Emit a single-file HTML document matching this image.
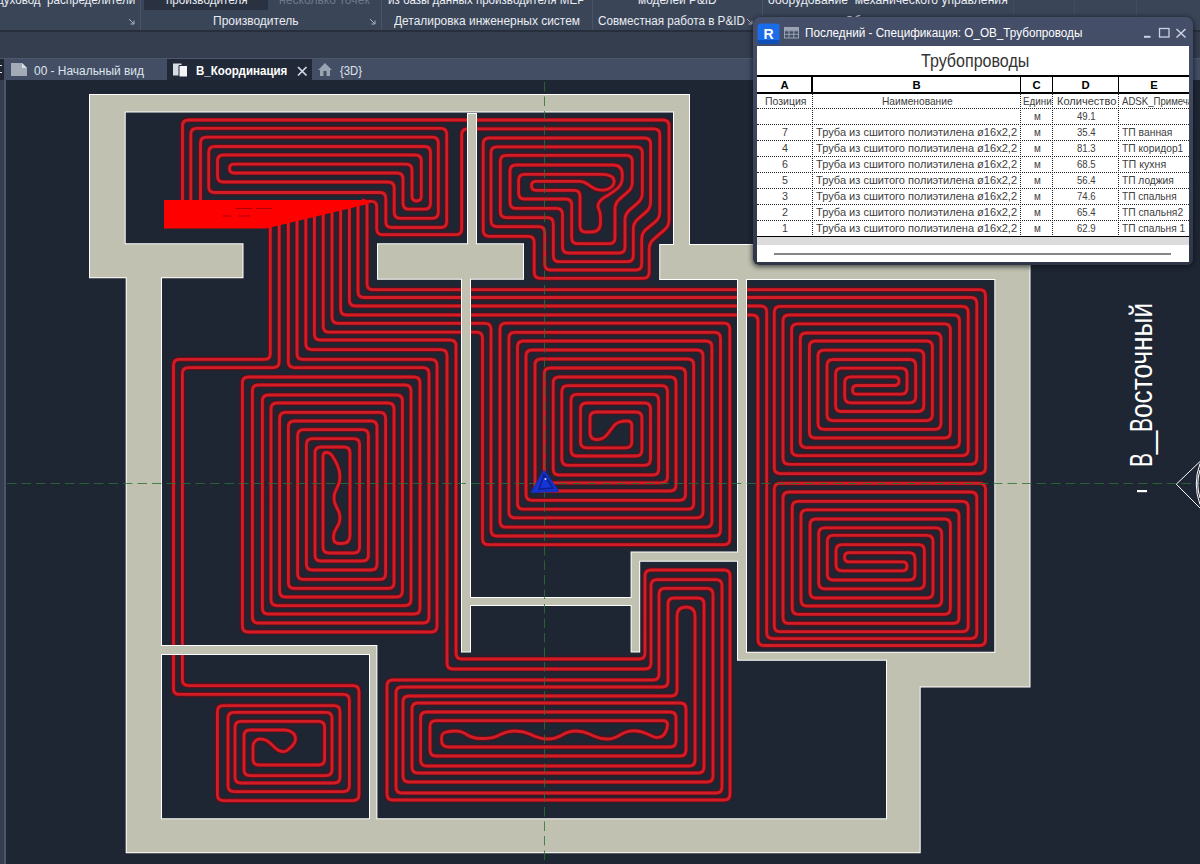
<!DOCTYPE html>
<html lang="ru">
<head>
<meta charset="utf-8">
<title>Revit - В_Координация</title>
<style>
html,body{margin:0;padding:0;}
body{width:1200px;height:864px;overflow:hidden;background:#1f2633;position:relative;font-family:"Liberation Sans",sans-serif;}
#plan{position:absolute;left:0;top:0;}
.abs{position:absolute;}
#ribbon{left:0;top:0;width:1200px;height:30px;background:#3b4558;}
#ribline{left:0;top:30px;width:1200px;height:2px;background:#282f3c;}
#optbar{left:0;top:32px;width:1200px;height:26px;background:#353e4f;}
#tabbar{left:0;top:58px;width:1200px;height:22px;background:#434e65;border-top:1px solid #4d586d;box-sizing:border-box;}
#leftstrip{left:0;top:80px;width:4px;height:784px;background:#343e50;border-right:2px solid #4a556a;}
.tx{position:absolute;white-space:nowrap;transform-origin:0 0;}
.rt{color:#e9edf3;font-size:12px;line-height:14px;}
.tt{color:#dfe4ec;font-size:12.5px;line-height:16px;}
.rt.dis{color:#6e7889;}
.sep{position:absolute;top:0;width:1px;height:30px;background:#4a5468;}
.tab{position:absolute;top:59px;height:21px;line-height:21px;font-size:13px;color:#dfe4ec;white-space:nowrap;}
#tabactive{left:167px;width:145px;background:#212938;}
#win{left:753px;top:17px;width:440px;height:248px;background:linear-gradient(to bottom,#454f69 0,#434d66 30px,#3a4358 55%,#2e3647 100%);border-radius:8px 8px 6px 6px;box-shadow:0 1px 5px 1px rgba(10,14,22,.65);}
.wt{font-size:12px;line-height:16px;color:#fff;}
.gc{font-size:10.7px;line-height:16px;color:#404040;}
.vt{font-size:31.4px;line-height:34px;color:#fff;}
.gtitle{font-size:18px;line-height:26px;color:#333;}
#wincontent{position:absolute;left:4px;top:29px;width:432px;height:216px;background:#fff;overflow:hidden;}
.gost{font-family:"Liberation Sans",sans-serif;color:#222;white-space:nowrap;position:absolute;transform-origin:0 0;}
.hl{position:absolute;left:0;width:432px;height:0;border-top:1px dotted #222;}
.vl{position:absolute;top:47px;width:0;height:144px;border-left:1px dotted #222;}
.cell{position:absolute;height:16px;line-height:16px;font-size:13px;color:#2a2a2a;white-space:nowrap;}
.cell span{display:inline-block;transform-origin:0 50%;}
.cc{text-align:center;}
.cc span{transform-origin:50% 50%;}
.hd{position:absolute;top:32px;height:15px;line-height:15px;font-size:11.3px;font-weight:bold;color:#000;text-align:center;}
</style>
</head>
<body>
<svg id="plan" width="1200" height="864" viewBox="0 0 1200 864">
<defs><path id="pp" d="M200.5 203L200.5 143.2Q200.5 137.2 206.5 137.2L432.3 137.2Q438.3 137.2 438.3 143.2L438.3 212.3Q438.3 218.3 432.3 218.3L400.2 218.3Q394.2 218.3 394.2 212.3L394.2 188Q394.2 182 388.2 182L223.5 182Q217.5 182 217.5 176L217.5 161Q217.5 155 223.5 155L415.3 155Q421.3 155 421.3 161L421.3 196.3Q421.3 201 416.6 201L416.6 201Q412 201 412 196.3L412 170.2Q412 164.2 406 164.2L233.9 164.2Q229.5 164.2 229.5 168.6L229.5 168.6Q229.5 173 233.9 173L397 173Q403 173 403 179L403 203.2Q403 209.2 409 209.2L424.5 209.2Q430.5 209.2 430.5 203.2L430.5 152.5Q430.5 146.5 424.5 146.5L214.7 146.5Q208.7 146.5 208.7 152.5L208.7 186.5Q208.7 192.5 214.7 192.5L379.8 192.5Q385.8 192.5 385.8 198.5L385.8 221.5Q385.8 227.5 391.8 227.5L440.7 227.5Q446.7 227.5 446.7 221.5L446.7 134.3Q446.7 128.3 440.7 128.3L196.8 128.3Q190.8 128.3 190.8 134.3L190.8 203M182.5 203L182.5 126Q182.5 120 188.5 120L663 120Q669 120 669 126L669 220Q669 226 664.4 229.9L653.8 239.1Q649.2 243 649.2 249L649.2 272.3Q649.2 278.3 643.2 278.3L540.2 278.3Q534.2 278.3 534.2 272.3L534.2 242.3Q534.2 236.3 528.2 236.3L489.2 236.3Q483.2 236.3 483.2 230.3L483.2 144Q483.2 138 489.2 138L644.6 138Q650.6 138 650.6 144L650.6 202Q650.6 208 646.1 211.9L637.8 219.1Q633.3 223 633.3 229L633.3 255.7Q633.3 261.7 627.3 261.7L559.3 261.7Q553.3 261.7 553.3 255.7L553.3 223.6Q553.3 217.6 547.3 217.6L506.3 217.6Q500.3 217.6 500.3 211.6L500.3 161.4Q500.3 155.4 506.3 155.4L626.3 155.4Q632.3 155.4 632.3 161.4L632.3 182Q632.3 188 627.8 191.9L619.5 199.1Q615 203 615 209L615 237.7Q615 243.7 609 243.7L577.7 243.7Q571.7 243.7 571.7 237.7L571.7 205Q571.7 199 565.7 199L524.6 199Q518.6 199 518.6 193L518.6 180.3Q518.6 174.3 524.6 174.3L602 174.3Q606 174.3 609.8 175.7L610.2 175.8Q613.5 177 614 180.5L614 180.5Q614.5 184 612 186.5L611.8 186.8Q609 189.5 605.1 189.9L603.3 190.1Q599 190.5 595 188.8L595 188.8Q591 187 587.6 184.2L587.5 184.2Q584 181.3 579.5 181.3L536 181.3Q531.5 181.3 531.5 185.8L531.5 185.8Q531.5 190.3 536 190.3L574 190.3Q580 190.3 580 196.3L580 226Q580 232 586 232L591 232Q600.5 232 600.5 222.5L600.5 217.4Q600.5 213 598.8 209L598.6 208.8Q597 205 599.5 201.8L599.5 201.8Q602 198.5 605.6 196.5L607.5 195.5Q613 192.5 617.6 188.3L617.6 188.2Q622.3 184 622.3 177.7L622.3 174.5Q622.3 165 612.8 165L516 165Q510 165 510 171L510 202.4Q510 208.4 516 208.4L556.5 208.4Q562.5 208.4 562.5 214.4L562.5 247Q562.5 253 568.5 253L619 253Q625 253 625 247L625 220Q625 214 629.5 210.1L637.8 202.9Q642.3 199 642.3 193L642.3 152.8Q642.3 146.8 636.3 146.8L497 146.8Q491 146.8 491 152.8L491 220.6Q491 226.6 497 226.6L538.7 226.6Q544.7 226.6 544.7 232.6L544.7 264Q544.7 270 550.7 270L635.7 270Q641.7 270 641.7 264L641.7 239Q641.7 233 646.3 229.2L655.2 221.8Q659.8 218 659.8 212L659.8 134.8Q659.8 128.8 653.8 128.8L467.7 128.8Q461.7 128.8 461.7 134.8L461.7 228.7Q461.7 234.7 455.7 234.7L382.7 234.7Q376.7 234.7 376.7 228.7L376.7 206.7Q376.7 201.3 371.4 201.3L366 201.3M274.2 220.8L276.7 221.6Q279.2 222.3 279.2 225L279.2 361.6Q279.2 367.6 273.2 367.6L188.4 367.6Q182.4 367.6 182.4 373.6L182.4 679.6Q182.4 685.6 188.4 685.6L353 685.6Q359 685.6 359 691.6L359 794.6Q359 800.6 353 800.6L223.4 800.6Q217.4 800.6 217.4 794.6L217.4 711.6Q217.4 705.6 223.4 705.6L334 705.6Q340 705.6 340 711.6L340 777Q340 783 334 783L241 783Q235 783 235 777L235 727.4Q235 721.4 241 721.4L318.6 721.4Q324.6 721.4 324.6 727.4L324.6 759Q324.6 765 318.6 765L259 765Q253 765 253 759L253 746.4Q253 743 255.5 740.8L255.5 740.8Q258 738.5 261.3 739.1L262.5 739.2Q267 740 270.3 743.2L275.8 748.4Q278.5 751 282.2 751.5L282.2 751.5Q286 752 288.7 749.3L292.8 745.2Q295.5 742.5 295.5 738.8L295.5 738.8Q295.5 735 292.5 732.7L292.2 732.5Q289 730 284.9 730L250 730Q244 730 244 736L244 769.6Q244 775.6 250 775.6L326 775.6Q332 775.6 332 769.6L332 718.4Q332 712.4 326 712.4L234 712.4Q228 712.4 228 718.4L228 785.6Q228 791.6 234 791.6L343.4 791.6Q349.4 791.6 349.4 785.6L349.4 700.4Q349.4 694.4 343.4 694.4L179.5 694.4Q173.5 694.4 173.5 688.4L173.5 365.4Q173.5 359.4 179.5 359.4L264.3 359.4Q270.3 359.4 270.3 353.4L270.3 229.7Q270.3 228 270.3 226.2L270.3 226.2Q270.3 224.5 268.6 224L265.3 223M292 216.6L294.5 217.4Q297 218.1 297 220.7L297 353.4Q297 359.4 303 359.4L431 359.4Q437 359.4 437 365.4L437 626Q437 632 431 632L248.4 632Q242.4 632 242.4 626L242.4 383Q242.4 377 248.4 377L414 377Q420 377 420 383L420 608Q420 614 414 614L268.4 614Q262.4 614 262.4 608L262.4 401Q262.4 395 268.4 395L396.4 395Q402.4 395 402.4 401L402.4 591Q402.4 597 396.4 597L285.6 597Q279.6 597 279.6 591L279.6 418.4Q279.6 412.4 285.6 412.4L379.6 412.4Q385.6 412.4 385.6 418.4L385.6 573.4Q385.6 579.4 379.6 579.4L303.6 579.4Q297.6 579.4 297.6 573.4L297.6 435.6Q297.6 429.6 303.6 429.6L362.4 429.6Q368.4 429.6 368.4 435.6L368.4 555Q368.4 561 362.4 561L321 561Q315 561 315 555L315 453Q315 447 321 447L344 447Q350 447 350 453L350 535.2Q350 543.5 341.8 543.5L339.2 543.5Q333.5 543.5 333.5 537.8L333.5 537.6Q333.5 532 336.8 527.5L337.1 527.1Q340 523 340 518L340 518Q340 513 337.4 508.7L336.6 507.3Q334 503 334 498L334 498Q334 493 336.6 488.7L337 488Q340 483 340 477.2L340 477Q340 471 337.5 465.5L336.9 464.1Q335 460 332.5 456.2L331.9 455.4Q330 452.5 326.5 452.5L326.5 452.5Q323 452.5 323 456L323 547Q323 553 329 553L353.6 553Q359.6 553 359.6 547L359.6 444.6Q359.6 438.6 353.6 438.6L312.4 438.6Q306.4 438.6 306.4 444.6L306.4 564Q306.4 570 312.4 570L371 570Q377 570 377 564L377 427Q377 421 371 421L294.4 421Q288.4 421 288.4 427L288.4 582.4Q288.4 588.4 294.4 588.4L388 588.4Q394 588.4 394 582.4L394 409Q394 403 388 403L277 403Q271 403 271 409L271 599.6Q271 605.6 277 605.6L405 605.6Q411 605.6 411 599.6L411 391Q411 385 405 385L258.4 385Q252.4 385 252.4 391L252.4 617Q252.4 623 258.4 623L423 623Q429 623 429 617L429 373.6Q429 367.6 423 367.6L294.3 367.6Q288.3 367.6 288.3 361.6L288.3 222.8Q288.3 220.2 285.8 219.4L283.3 218.7M318.2 210.4L320.7 211.2Q323.2 211.9 323.2 214.5L323.2 326.2Q323.2 332.2 329.2 332.2L476.5 332.2Q482.5 332.2 482.5 338.2L482.5 538.7Q482.5 544.7 488.5 544.7L723.8 544.7Q729.8 544.7 729.8 538.7L729.8 329.2Q729.8 323.2 723.8 323.2L506 323.2Q500 323.2 500 329.2L500 521.2Q500 527.2 506 527.2L705.9 527.2Q711.9 527.2 711.9 521.2L711.9 347Q711.9 341 705.9 341L523.5 341Q517.5 341 517.5 347L517.5 503.2Q517.5 509.2 523.5 509.2L687.7 509.2Q693.7 509.2 693.7 503.2L693.7 365Q693.7 359 687.7 359L541 359Q535 359 535 365L535 485Q535 491 541 491L670 491Q676 491 676 485L676 383Q676 377 670 377L559.2 377Q553.2 377 553.2 383L553.2 469Q553.2 475 559.2 475L652.7 475Q658.7 475 658.7 469L658.7 400.4Q658.7 394.4 652.7 394.4L577 394.4Q571 394.4 571 400.4L571 450Q571 456 577 456L635.9 456Q641.9 456 641.9 450L641.9 418Q641.9 412 635.9 412L596 412Q590 412 590 418L590 433Q590 439.5 596.5 439.5L597.5 439.5Q603 439.5 606.5 435.2L606.8 434.9Q610 431 613 427L613.8 425.9Q616 423 619.5 422L619.5 422Q623 421 626.6 421L627.4 421Q631.8 421 631.8 425.4L631.8 441.8Q631.8 447.8 625.8 447.8L586.5 447.8Q580.5 447.8 580.5 441.8L580.5 409Q580.5 403 586.5 403L644.5 403Q650.5 403 650.5 409L650.5 459.3Q650.5 465.3 644.5 465.3L567.8 465.3Q561.8 465.3 561.8 459.3L561.8 391.6Q561.8 385.6 567.8 385.6L661.5 385.6Q667.5 385.6 667.5 391.6L667.5 476.8Q667.5 482.8 661.5 482.8L550.3 482.8Q544.3 482.8 544.3 476.8L544.3 374Q544.3 368 550.3 368L679.5 368Q685.5 368 685.5 374L685.5 494.3Q685.5 500.3 679.5 500.3L532 500.3Q526 500.3 526 494.3L526 356Q526 350 532 350L697 350Q703 350 703 356L703 511.8Q703 517.8 697 517.8L514.9 517.8Q508.9 517.8 508.9 511.8L508.9 338.4Q508.9 332.4 514.9 332.4L714.5 332.4Q720.5 332.4 720.5 338.4L720.5 530Q720.5 536 714.5 536L497 536Q491 536 491 530L491 329.3Q491 323.3 485 323.3L338 323.3Q332 323.3 332 317.3L332 212.4Q332 209.8 329.5 209.1L327 208.3M309.4 212.5L311.9 213.3Q314.4 214 314.4 216.6L314.4 334Q314.4 340 320.4 340L450 340Q456 340 456 346L456 653Q456 659 462 659L639 659Q645 659 645 653L645 576Q645 570 651 570L724 570Q730 570 730 576L730 794Q730 800 724 800L393 800Q387 800 387 794L387 686Q387 680 393 680L653 680Q659 680 659 674L659 594.4Q659 588.4 665 588.4L707 588.4Q713 588.4 713 594.4L713 776Q713 782 707 782L409 782Q403 782 403 776L403 702Q403 696 409 696L671 696Q677 696 677 690L677 616Q677 607 686 607L686 607Q695 607 695 616L695 760Q695 766 689 766L426.6 766Q420.6 766 420.6 760L420.6 718Q420.6 712 426.6 712L670 712Q676 712 676 718L676 741Q676 747 670 747L448.5 747Q441.5 747 441.5 740L441.5 737.9Q441.5 733 446.2 732L446.2 732Q451 731 455.9 731L456 731Q461 731 465.2 733.6L467 734.8Q473 738.5 480.1 738.5L485.1 738.5Q493 738.5 500 734.8L500 734.8Q507 731 514.9 731L515 731Q523 731 530.3 734.2L534.6 736.2Q541 739 548 739L548 739Q555 739 561.1 735.5L562.9 734.5Q569 731 576 731L576 731Q583 731 589.3 734L593.7 736Q600 739 607 739L607 739Q614 739 619.8 735.1L620.2 734.9Q626 731 633 730.8L633 730.8Q640 730.5 646.3 733.5L652.8 736.5Q656 738 659.5 737.2L659.5 737.2Q663 736.5 664.8 733.4L665.3 732.6Q667.5 729 667.5 724.8L667.5 724.8Q667.5 720.6 663.3 720.6L436 720.6Q430 720.6 430 726.6L430 750Q430 756 436 756L680 756Q686 756 686 750L686 709Q686 703 680 703L418 703Q412 703 412 709L412 767Q412 773 418 773L698 773Q704 773 704 767L704 604Q704 598 698 598L674 598Q668 598 668 604L668 681Q668 687 662 687L402 687Q396 687 396 693L396 787Q396 793 402 793L716 793Q722 793 722 787L722 585.6Q722 579.6 716 579.6L657 579.6Q651 579.6 651 585.6L651 663Q651 669 645 669L453 669Q447 669 447 663L447 355.6Q447 349.6 441 349.6L311.8 349.6Q305.8 349.6 305.8 343.6L305.8 218.7Q305.8 216 303.3 215.3L300.8 214.5M362 200L364.5 200.8Q367 201.5 367 204.1L367 283.7Q367 289.7 373 289.7L979.5 289.7Q985.5 289.7 985.5 295.7L985.5 467.6Q985.5 473.6 979.5 473.6L780.3 473.6Q774.3 473.6 774.3 467.6L774.3 312.4Q774.3 306.4 780.3 306.4L962.2 306.4Q968.2 306.4 968.2 312.4L968.2 449.6Q968.2 455.6 962.2 455.6L797.6 455.6Q791.6 455.6 791.6 449.6L791.6 329.8Q791.6 323.8 797.6 323.8L944.4 323.8Q950.4 323.8 950.4 329.8L950.4 432Q950.4 438 944.4 438L815.4 438Q809.4 438 809.4 432L809.4 347Q809.4 341 815.4 341L926.4 341Q932.4 341 932.4 347L932.4 414.6Q932.4 420.6 926.4 420.6L833 420.6Q827 420.6 827 414.6L827 365.5Q827 359.5 833 359.5L909.7 359.5Q915.7 359.5 915.7 365.5L915.7 396.8Q915.7 402.8 909.7 402.8L850.7 402.8Q844.7 402.8 844.7 396.8L844.7 382.8Q844.7 376.8 850.7 376.8L894.6 376.8Q899 376.8 899 381.1L899 381.1Q899 385.5 894.6 385.5L856.9 385.5Q852.5 385.5 852.5 389.9L852.5 389.9Q852.5 394.2 856.9 394.2L901 394.2Q907 394.2 907 388.2L907 374.2Q907 368.2 901 368.2L841.6 368.2Q835.6 368.2 835.6 374.2L835.6 405.5Q835.6 411.5 841.6 411.5L917.8 411.5Q923.8 411.5 923.8 405.5L923.8 356.2Q923.8 350.2 917.8 350.2L824 350.2Q818 350.2 818 356.2L818 423.3Q818 429.3 824 429.3L935 429.3Q941 429.3 941 423.3L941 339Q941 333 935 333L806.3 333Q800.3 333 800.3 339L800.3 441.6Q800.3 447.6 806.3 447.6L953.5 447.6Q959.5 447.6 959.5 441.6L959.5 321Q959.5 315 953.5 315L789 315Q783 315 783 321L783 458.3Q783 464.3 789 464.3L970.8 464.3Q976.8 464.3 976.8 458.3L976.8 303.5Q976.8 297.5 970.8 297.5L364 297.5Q358 297.5 358 291.5L358 208.9Q358 207.2 358 205.4L358 205.4Q358 203.7 356.3 203.2L353 202.2M335.6 206.3L338.1 207Q340.6 207.8 340.6 210.4L340.6 309Q340.6 315 346.6 315L752 315Q758 315 758 321L758 639.5Q758 645.5 764 645.5L979.5 645.5Q985.5 645.5 985.5 639.5L985.5 489.3Q985.5 483.3 979.5 483.3L780.3 483.3Q774.3 483.3 774.3 489.3L774.3 625.7Q774.3 631.7 780.3 631.7L962.2 631.7Q968.2 631.7 968.2 625.7L968.2 507.3Q968.2 501.3 962.2 501.3L798.2 501.3Q792.2 501.3 792.2 507.3L792.2 608.3Q792.2 614.3 798.2 614.3L944.4 614.3Q950.4 614.3 950.4 608.3L950.4 525Q950.4 519 944.4 519L816 519Q810 519 810 525L810 592Q810 598 816 598L927 598Q933 598 933 592L933 541.3Q933 535.3 927 535.3L833.3 535.3Q827.3 535.3 827.3 541.3L827.3 574Q827.3 580 833.3 580L909 580Q915 580 915 574L915 558.7Q915 552.7 909 552.7L849 552.7Q844.5 552.7 844.5 557.2L844.5 557.2Q844.5 561.8 849 561.8L902.5 561.8Q907 561.8 907 566.3L907 566.3Q907 570.8 902.5 570.8L842 570.8Q836 570.8 836 564.8L836 550.7Q836 544.7 842 544.7L918.4 544.7Q924.4 544.7 924.4 550.7L924.4 582.8Q924.4 588.8 918.4 588.8L824.7 588.8Q818.7 588.8 818.7 582.8L818.7 533.8Q818.7 527.8 824.7 527.8L935.7 527.8Q941.7 527.8 941.7 533.8L941.7 600Q941.7 606 935.7 606L807 606Q801 606 801 600L801 515.8Q801 509.8 807 509.8L953 509.8Q959 509.8 959 515.8L959 617.4Q959 623.4 953 623.4L789 623.4Q783 623.4 783 617.4L783 498Q783 492 789 492L970.8 492Q976.8 492 976.8 498L976.8 632.6Q976.8 638.6 970.8 638.6L772.7 638.6Q766.7 638.6 766.7 632.6L766.7 312Q766.7 306 760.7 306L355.4 306Q349.4 306 349.4 300L349.4 211Q349.4 209.2 349.4 207.5L349.4 207.5Q349.4 205.7 347.7 205.2L344.4 204.2"/></defs>
<g fill="none" stroke-linejoin="round"><use href="#pp" stroke="#6e0014" stroke-opacity=".2" stroke-width="7"/><use href="#pp" stroke="#7a0a14" stroke-width="4.1"/><use href="#pp" stroke="#d21c26" stroke-width="2.8"/></g>
<path d="M164 200H369V203.8L266 228.4H164Z" fill="#ff0000"/>
<path d="M236 208.5h16M256 208.5h16M222 216h10M238 216h12" stroke="#b00010" stroke-width="1"/>
<path d="M89.0 278.3L125.7 278.3L125.7 818.3L125.7 853.3L162.0 853.3L886.0 853.3L920.7 853.3L920.7 818.3L920.7 687.5L994.3 687.5L1030.5 687.5L1030.5 651.8L1030.5 280.0L1030.5 244.0L994.3 244.0L690.0 244.0L690.0 112.6L690.0 94.0L673.0 94.0L125.7 94.0L89.0 94.0L89.0 112.6L89.0 243.3ZM377.4 818.3L377.4 655.0L377.4 645.0L369.0 645.0L162.0 645.0L162.0 278.3L243.5 278.3L243.5 243.3L125.7 243.3L125.7 112.6L673.0 112.6L673.0 244.0L659.2 244.0L659.2 280.0L737.0 280.0L737.0 551.6L640.2 551.6L630.6 551.6L630.6 561.8L630.6 597.0L471.0 597.0L471.0 279.7L524.0 279.7L524.0 243.3L477.0 243.3L477.0 113.0L467.0 113.0L467.0 243.3L377.0 243.3L377.0 279.7L461.0 279.7L461.0 652.6L471.0 652.6L471.0 606.0L630.6 606.0L630.6 652.6L640.2 652.6L640.2 561.8L737.0 561.8L737.0 651.8L737.0 660.7L747.0 660.7L886.0 660.7L886.0 687.5L886.0 818.3ZM369.0 818.3L162.0 818.3L162.0 655.0L369.0 655.0ZM747.0 551.6L747.0 280.0L994.3 280.0L994.3 651.8L920.7 651.8L886.0 651.8L747.0 651.8L747.0 561.8Z" fill="#ffffff" fill-rule="evenodd"/>
<path d="M90.0 277.3L126.7 277.3L126.7 852.3L919.7 852.3L919.7 686.5L1029.5 686.5L1029.5 245.0L689.0 245.0L689.0 95.0L90.0 95.0ZM746.0 279.0L995.3 279.0L995.3 652.8L746.0 652.8ZM376.4 819.3L376.4 646.0L161.0 646.0L161.0 277.3L242.5 277.3L242.5 244.3L124.7 244.3L124.7 111.6L674.0 111.6L674.0 245.0L660.2 245.0L660.2 279.0L738.0 279.0L738.0 552.6L631.6 552.6L631.6 598.0L470.0 598.0L470.0 278.7L523.0 278.7L523.0 244.3L476.0 244.3L476.0 114.0L468.0 114.0L468.0 244.3L378.0 244.3L378.0 278.7L462.0 278.7L462.0 651.6L470.0 651.6L470.0 605.0L631.6 605.0L631.6 651.6L639.2 651.6L639.2 560.8L738.0 560.8L738.0 659.7L887.0 659.7L887.0 819.3ZM370.0 819.3L161.0 819.3L161.0 654.0L370.0 654.0Z" fill="#c1c1b1" fill-rule="evenodd"/>
<path d="M7 483.5H1200M544.5 82V864" stroke="#2b7035" stroke-opacity=".8" stroke-width="1" stroke-dasharray="9.5 5" fill="none"/>
<g transform="translate(545 483)"><path d="M-1 -12L13 8L-13 9Z" fill="#1634d8"/><path d="M-1 -12L13 8L-13 9Z" fill="none" stroke="#1430c0" stroke-width="2" stroke-linejoin="round"/><path d="M-1 -8L-6 6L8 5Z" fill="none" stroke="#0b1f8a" stroke-width="1.6"/><circle cx="0.5" cy="-4" r="1" fill="#cfe0ff"/></g>
<path d="M1200 461.5L1176.3 484.2L1200 508" fill="none" stroke="#fff" stroke-width="1"/>
<path d="M1200 463.5Q1192.5 484 1200 504.5M1200 470Q1195.6 484 1200 498" fill="none" stroke="#fff" stroke-width="1"/>
<rect x="1137" y="490" width="10" height="2.2" fill="#fff"/>
</svg>
<div id="ribbon" class="abs">
  <div class="abs" style="left:144px;top:0;width:124px;height:10px;background:#2a3241;"></div>
  <div class="sep" style="left:140px;"></div>
  <div class="sep" style="left:381px;"></div>
  <div class="sep" style="left:592px;"></div>
  <div class="sep" style="left:762px;"></div>
  <div class="sep" style="left:1013px;background:#434d61;"></div>
  <div class="sep" style="left:1074px;background:#434d61;"></div>
  <div class="sep" style="left:1136px;background:#434d61;"></div>
  <svg class="abs" style="left:128px;top:18px;" width="8" height="8"><path d="M1 1L6 6M6 2.5V6H2.5" stroke="#aab2c0" stroke-width="1" fill="none"/></svg>
  <svg class="abs" style="left:369px;top:18px;" width="8" height="8"><path d="M1 1L6 6M6 2.5V6H2.5" stroke="#aab2c0" stroke-width="1" fill="none"/></svg>
  <svg class="abs" style="left:746px;top:18px;" width="8" height="8"><path d="M1 1L6 6M6 2.5V6H2.5" stroke="#aab2c0" stroke-width="1" fill="none"/></svg>
</div>
<div id="r1" class="tx rt" style="left:-3px;top:-7px;transform:scaleX(0.9650);">духовод&nbsp; распределители</div>
<div id="r2" class="tx rt" style="left:166px;top:-7px;transform:scaleX(0.9762);">производителя</div>
<div id="r3" class="tx rt" style="left:279px;top:-7px;transform:scaleX(1.0111);color:#6e7889;">несколько точек</div>
<div id="r4" class="tx rt" style="left:388px;top:-7px;transform:scaleX(0.9657);">из базы данных производителя MEP</div>
<div id="r5" class="tx rt" style="left:638px;top:-7px;transform:scaleX(0.9875);">моделей P&amp;ID</div>
<div id="r6" class="tx rt" style="left:768px;top:-7px;transform:scaleX(1.0127);">оборудование&nbsp; механического управления</div>
<div id="r7" class="tx rt" style="left:213px;top:13.5px;transform:scaleX(1.0000);">Производитель</div>
<div id="r8" class="tx rt" style="left:394px;top:13.5px;transform:scaleX(0.9947);">Деталировка инженерных систем</div>
<div id="r9" class="tx rt" style="left:598px;top:13.5px;transform:scaleX(0.9735);">Совместная работа в P&amp;ID</div>
<div id="r10" class="tx rt" style="left:845px;top:13.5px;transform:scaleX(0.9756);">Оборудование</div>
<div id="ribline" class="abs"></div>
<div id="optbar" class="abs"></div>
<div id="tabbar" class="abs"></div>
<div class="abs" style="left:0;top:59px;width:4px;height:21px;background:#202733;"></div>
<div class="abs" style="left:0;top:64.5px;width:2px;height:1.5px;background:#dfe4ec;"></div>
<div class="abs" style="left:0;top:71.5px;width:2px;height:1.5px;background:#dfe4ec;"></div>
<div id="tabactive" class="tab"></div>
<svg class="abs" style="left:11px;top:63px;" width="17" height="14"><path d="M0 0H11L16 5V13H0Z" fill="#a3abb7"/><path d="M11 0V5H16Z" fill="#d9dee6"/></svg>
<svg class="abs" style="left:173px;top:62px;" width="18" height="16"><path d="M0 1.5H8.5V13.5H0Z" fill="#d7dbe2"/><path d="M6 3.5H14.5V15H6Z" fill="#f2f4f7" stroke="#212938" stroke-width="1"/></svg>
<svg class="abs" style="left:297px;top:65.5px;" width="11" height="11"><path d="M1 1L9.5 9.5M9.5 1L1 9.5" stroke="#d5dae2" stroke-width="1.7" fill="none"/></svg>
<svg class="abs" style="left:317px;top:62px;" width="16" height="15"><path d="M8 1L15 8H13V14H3V8H1Z" fill="#9aa3b0"/><path d="M6.5 9H9.5V14H6.5Z" fill="#434e65"/></svg>
<div id="t1" class="tx tt" style="left:34.3px;top:62.8px;transform:scaleX(0.9539);">00 - Начальный вид</div>
<div id="t2" class="tx tt" style="left:196px;top:62.8px;transform:scaleX(0.9222);font-weight:bold;color:#fff;">В_Координация</div>
<div id="t3" class="tx tt" style="left:340px;top:62.8px;transform:scaleX(0.9042);">{3D}</div>
<div id="leftstrip" class="abs"></div>

<div class="abs" style="left:1125.4px;top:466.2px;width:0;height:0;transform-origin:0 0;transform:rotate(-90deg);">
<div id="v1" class="tx vt" style="left:-1.5px;top:0px;transform:scaleX(0.6667);">В</div><div id="v2" class="tx vt" style="left:11.9px;top:0px;transform:scaleX(1.3235);">_</div><div id="v3" class="tx vt" style="left:33.9px;top:0px;transform:scaleX(0.6667);">В</div><div id="v4" class="tx vt" style="left:48px;top:0px;transform:scaleX(0.8355);">осточный</div>
</div>

<div id="win" class="abs">
  <svg class="abs" style="left:4px;top:6px;" width="24" height="22"><rect x="0.5" y="0.5" width="22" height="20.5" rx="3" fill="#1a6ce8"/><path d="M0.5 17V18a3 3 0 0 0 3 3H19.5a3 3 0 0 0 3-3V17Z" fill="#0f4fb8"/><text x="11.5" y="15.5" font-family="Liberation Sans, sans-serif" font-weight="bold" font-size="14" fill="#fff" text-anchor="middle">R</text></svg>
  <svg class="abs" style="left:31px;top:10px;" width="16" height="12"><rect x="0.5" y="0.5" width="14" height="10.5" fill="none" stroke="#9aa3b2" stroke-width="1"/><path d="M0.5 3.8H14.5M0.5 7.3H14.5M5 0.5V11M9.8 0.5V11" stroke="#9aa3b2" stroke-width="1" fill="none"/><rect x="0.5" y="0.5" width="14" height="3" fill="#9aa3b2"/></svg>
  <div id="w1" class="tx wt" style="left:52px;top:8px;transform:scaleX(0.9754);">Последний - Спецификация: О_ОВ_Трубопроводы</div>
  <svg class="abs" style="left:390px;top:10px;" width="46" height="12"><path d="M1 9.8H7.5" stroke="#cdd2e2" stroke-width="2"/><rect x="16.5" y="1.5" width="9.5" height="8.5" fill="none" stroke="#cdd2e2" stroke-width="1.3"/><path d="M33.5 2L42.5 10.5M42.5 2L33.5 10.5" stroke="#cdd2e2" stroke-width="1.5" fill="none"/></svg>
  <div id="wincontent">
    <div class="abs" style="left:0;top:29px;width:432px;height:2px;background:#000;"></div>
    <div class="abs" style="left:0;top:46px;width:432px;height:2px;background:#000;"></div>
    <div class="abs" style="left:54px;top:31px;width:2px;height:15px;background:#000;"></div>
    <div class="abs" style="left:263px;top:31px;width:1px;height:15px;background:#000;"></div>
    <div class="abs" style="left:295px;top:31px;width:1px;height:15px;background:#000;"></div>
    <div class="abs" style="left:361px;top:31px;width:1px;height:15px;background:#000;"></div>
    <div class="hd" style="left:0;width:55px;">A</div>
    <div class="hd" style="left:56px;width:207px;">B</div>
    <div class="hd" style="left:264px;width:31px;">C</div>
    <div class="hd" style="left:296px;width:65px;">D</div>
    <div class="hd" style="left:362px;width:70px;">E</div>
    <div class="hl" style="top:62px;"></div>
    <div class="hl" style="top:78px;"></div>
    <div class="hl" style="top:94px;"></div>
    <div class="hl" style="top:110px;"></div>
    <div class="hl" style="top:126px;"></div>
    <div class="hl" style="top:142px;"></div>
    <div class="hl" style="top:158px;"></div>
    <div class="hl" style="top:174px;"></div>
    <div class="vl" style="left:55px;"></div>
    <div class="vl" style="left:263px;"></div>
    <div class="vl" style="left:295px;"></div>
    <div class="vl" style="left:361px;"></div>
    <div class="abs" style="left:264px;top:46.8px;width:31px;height:16px;overflow:hidden;"><div class="tx gc" style="left:2px;top:0;transform:scaleX(.92);">Единица</div></div>
    <div class="abs" style="left:362px;top:46.8px;width:70px;height:16px;overflow:hidden;"><div class="tx gc" style="left:2.5px;top:0;transform:scaleX(.9);">ADSK_Примечание</div></div>
    <div id="h1" class="tx gc" style="left:8px;top:46.8px;transform:scaleX(0.9810);">Позиция</div>
    <div id="h2" class="tx gc" style="left:125px;top:46.8px;transform:scaleX(0.9527);">Наименование</div>
    <div id="h4" class="tx gc" style="left:299.70000000000005px;top:46.8px;transform:scaleX(1.0333);">Количество</div>
    <div id="c0" class="tx gc" style="left:276.5px;top:61.5px;transform:scaleX(0.9286);">м</div>
    <div id="d0" class="tx gc" style="left:320px;top:61.5px;transform:scaleX(0.8952);">49.1</div>
    <div id="a1" class="tx gc" style="left:25px;top:77.55px;transform:scaleX(1.0000);">7</div>
    <div id="b1" class="tx gc" style="left:58.60000000000002px;top:77.55px;transform:scaleX(1.0340);">Труба из сшитого полиэтилена ø16х2,2</div>
    <div id="c1" class="tx gc" style="left:276.5px;top:77.55px;transform:scaleX(0.9286);">м</div>
    <div id="d1" class="tx gc" style="left:320px;top:77.55px;transform:scaleX(0.8952);">35.4</div>
    <div id="e1" class="tx gc" style="left:364.5999999999999px;top:77.55px;transform:scaleX(0.9654);">ТП ванная</div>
    <div id="a2" class="tx gc" style="left:25px;top:93.6px;transform:scaleX(1.0000);">4</div>
    <div id="b2" class="tx gc" style="left:58.60000000000002px;top:93.6px;transform:scaleX(1.0340);">Труба из сшитого полиэтилена ø16х2,2</div>
    <div id="c2" class="tx gc" style="left:276.5px;top:93.6px;transform:scaleX(0.9286);">м</div>
    <div id="d2" class="tx gc" style="left:320px;top:93.6px;transform:scaleX(0.8952);">81.3</div>
    <div id="e2" class="tx gc" style="left:364.5999999999999px;top:93.6px;transform:scaleX(0.9594);">ТП коридор1</div>
    <div id="a3" class="tx gc" style="left:25px;top:109.65px;transform:scaleX(1.0000);">6</div>
    <div id="b3" class="tx gc" style="left:58.60000000000002px;top:109.65px;transform:scaleX(1.0340);">Труба из сшитого полиэтилена ø16х2,2</div>
    <div id="c3" class="tx gc" style="left:276.5px;top:109.65px;transform:scaleX(0.9286);">м</div>
    <div id="d3" class="tx gc" style="left:320px;top:109.65px;transform:scaleX(0.8952);">68.5</div>
    <div id="e3" class="tx gc" style="left:364.5999999999999px;top:109.65px;transform:scaleX(0.9977);">ТП кухня</div>
    <div id="a4" class="tx gc" style="left:25px;top:125.7px;transform:scaleX(1.0000);">5</div>
    <div id="b4" class="tx gc" style="left:58.60000000000002px;top:125.7px;transform:scaleX(1.0340);">Труба из сшитого полиэтилена ø16х2,2</div>
    <div id="c4" class="tx gc" style="left:276.5px;top:125.7px;transform:scaleX(0.9286);">м</div>
    <div id="d4" class="tx gc" style="left:320px;top:125.7px;transform:scaleX(0.8952);">56.4</div>
    <div id="e4" class="tx gc" style="left:364.5999999999999px;top:125.7px;transform:scaleX(0.9519);">ТП лоджия</div>
    <div id="a5" class="tx gc" style="left:25px;top:141.75px;transform:scaleX(1.0000);">3</div>
    <div id="b5" class="tx gc" style="left:58.60000000000002px;top:141.75px;transform:scaleX(1.0340);">Труба из сшитого полиэтилена ø16х2,2</div>
    <div id="c5" class="tx gc" style="left:276.5px;top:141.75px;transform:scaleX(0.9286);">м</div>
    <div id="d5" class="tx gc" style="left:320px;top:141.75px;transform:scaleX(0.8952);">74.6</div>
    <div id="e5" class="tx gc" style="left:364.5999999999999px;top:141.75px;transform:scaleX(0.9466);">ТП спальня</div>
    <div id="a6" class="tx gc" style="left:25px;top:157.8px;transform:scaleX(1.0000);">2</div>
    <div id="b6" class="tx gc" style="left:58.60000000000002px;top:157.8px;transform:scaleX(1.0340);">Труба из сшитого полиэтилена ø16х2,2</div>
    <div id="c6" class="tx gc" style="left:276.5px;top:157.8px;transform:scaleX(0.9286);">м</div>
    <div id="d6" class="tx gc" style="left:320px;top:157.8px;transform:scaleX(0.8952);">65.4</div>
    <div id="e6" class="tx gc" style="left:364.5999999999999px;top:157.8px;transform:scaleX(0.9594);">ТП спальня2</div>
    <div id="a7" class="tx gc" style="left:25px;top:173.85000000000002px;transform:scaleX(1.0000);">1</div>
    <div id="b7" class="tx gc" style="left:58.60000000000002px;top:173.85000000000002px;transform:scaleX(1.0340);">Труба из сшитого полиэтилена ø16х2,2</div>
    <div id="c7" class="tx gc" style="left:276.5px;top:173.85000000000002px;transform:scaleX(0.9286);">м</div>
    <div id="d7" class="tx gc" style="left:320px;top:173.85000000000002px;transform:scaleX(0.8952);">62.9</div>
    <div id="e7" class="tx gc" style="left:364.5999999999999px;top:173.85000000000002px;transform:scaleX(0.9463);">ТП спальня 1</div>
    <div id="gt" class="tx gtitle" style="left:163.60000000000002px;top:2px;transform:scaleX(0.8918);">Трубопроводы</div>
    <div class="abs" style="left:0;top:190px;width:432px;height:1px;background:#000;"></div>
    <div class="abs" style="left:0;top:191px;width:432px;height:8px;background:#dcdcdc;"></div>
    <div class="abs" style="left:17px;top:207px;width:397px;height:2px;background:#858585;"></div>
  </div>
</div>
</body>
</html>
